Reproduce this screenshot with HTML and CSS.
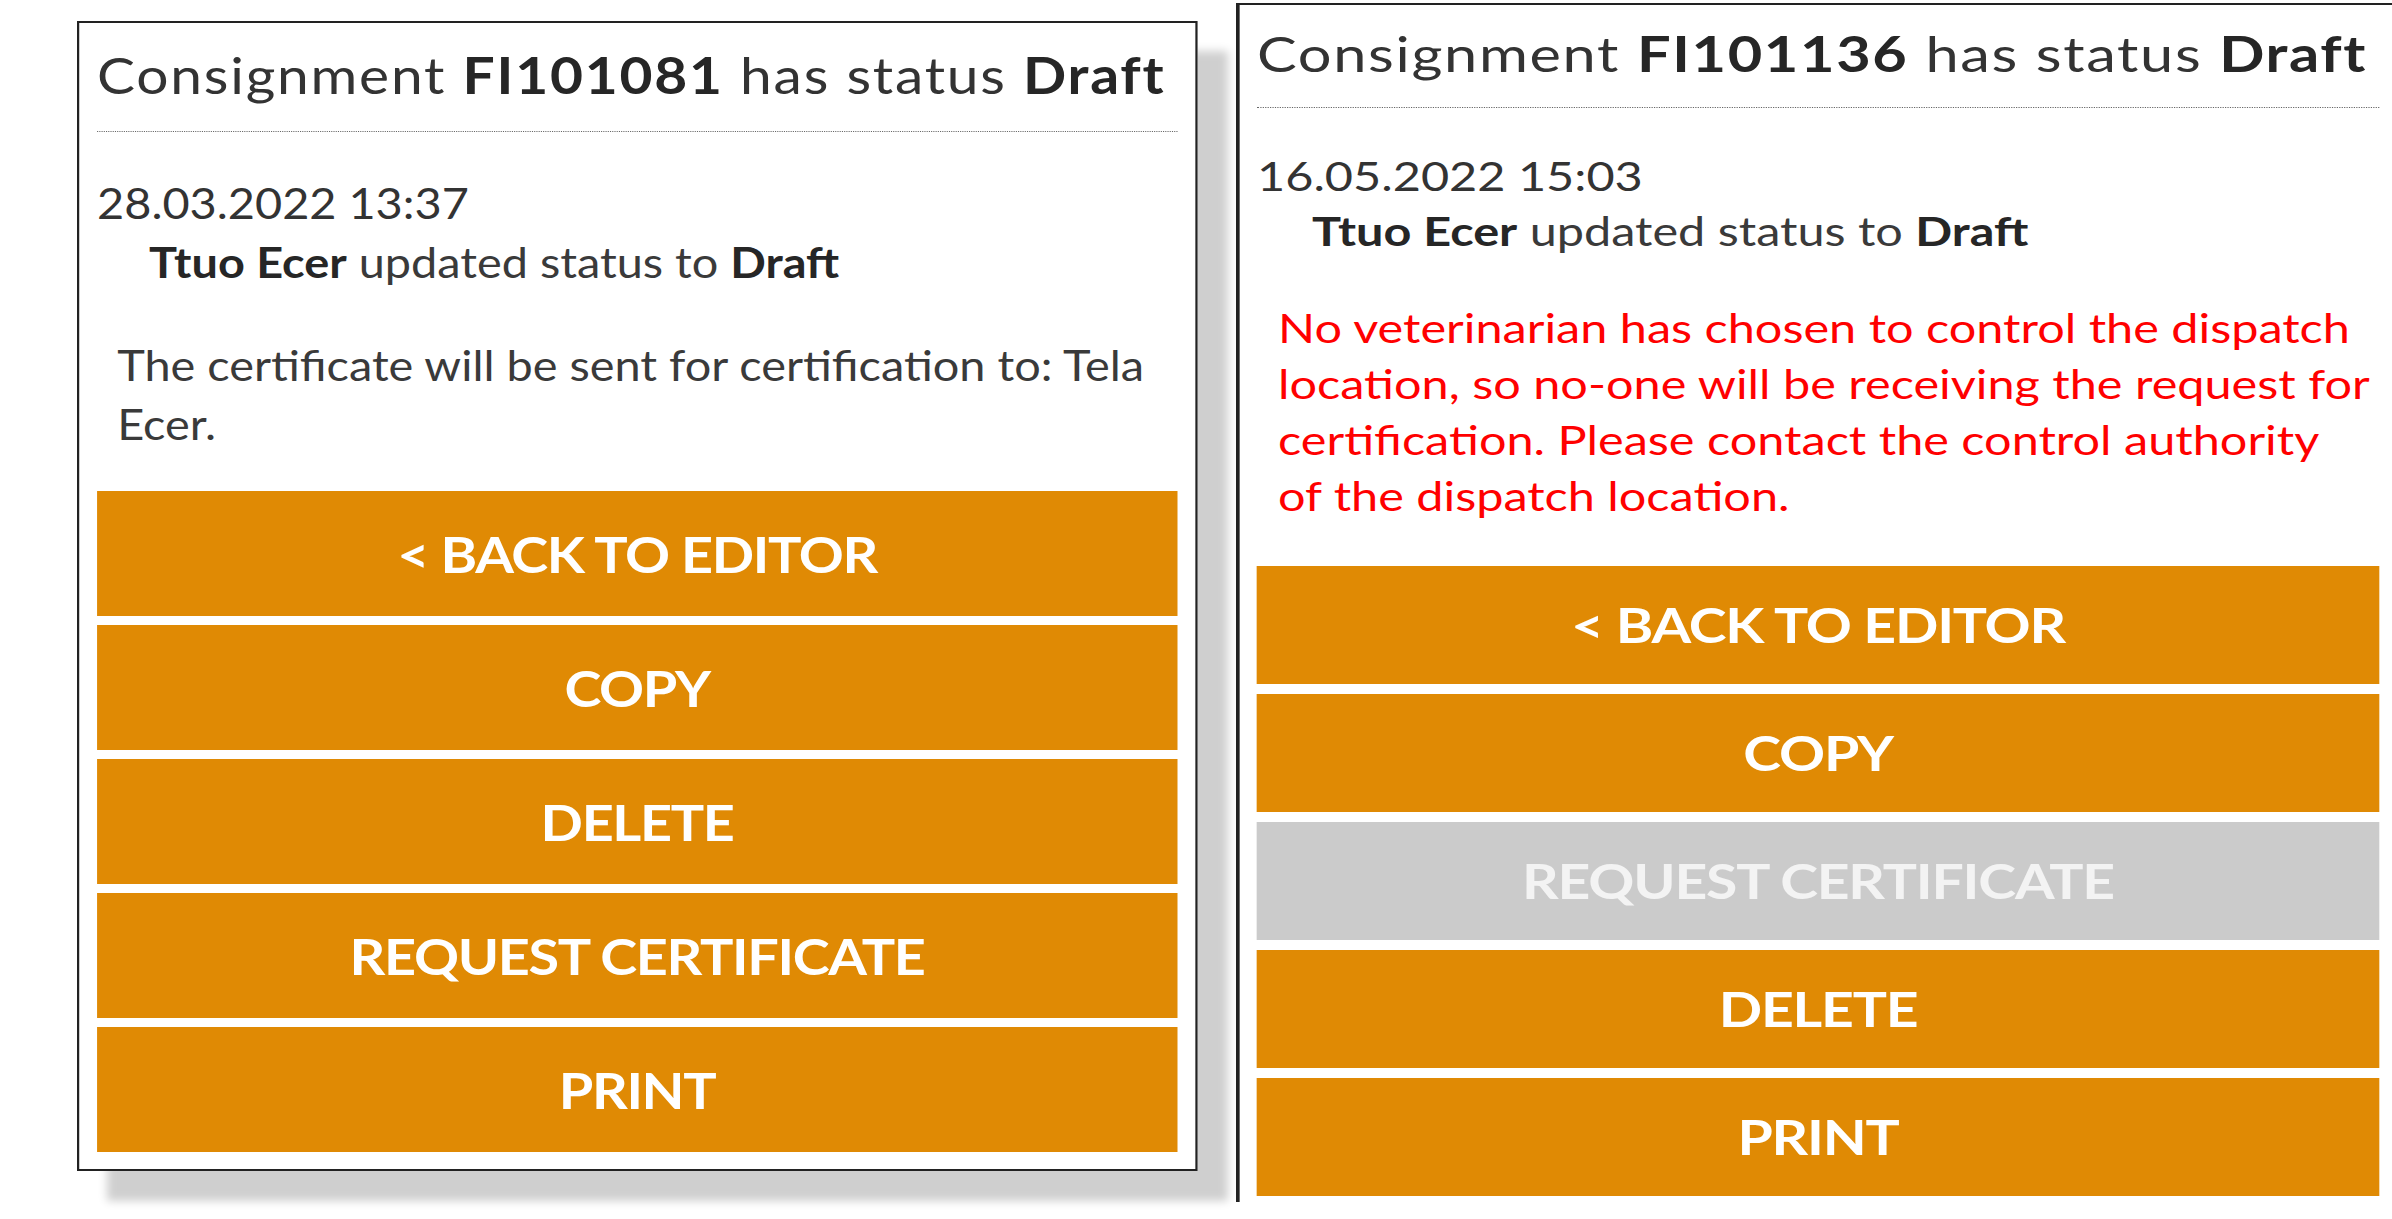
FILE: index.html
```html
<!DOCTYPE html>
<html>
<head>
    <title>Consignment status</title>
    <link rel="stylesheet" href="styles.css">
</head>
<body>
    <div class="board">
        <!-- certificate can be requested: recipient is known -->
        <section class="card card-left">
            <h2 class="card-title">Consignment <b>FI101081</b> has status <b>Draft</b></h2>
            <div class="history">
                <div class="history-date">28.03.2022 13:37</div>
                <div class="history-entry"><b>Ttuo Ecer</b> updated status to <b>Draft</b></div>
            </div>
            <p class="card-note">The certificate will be sent for certification to: Tela Ecer.</p>
            <div class="actions">
                <button class="action">&lt; BACK TO EDITOR</button>
                <button class="action">COPY</button>
                <button class="action">DELETE</button>
                <button class="action">REQUEST CERTIFICATE</button>
                <button class="action">PRINT</button>
            </div>
        </section>

        <!-- no veterinarian for the dispatch location, request is disabled -->
        <section class="card card-right">
            <h2 class="card-title">Consignment <b>FI101136</b> has status <b>Draft</b></h2>
            <div class="history">
                <div class="history-date">16.05.2022 15:03</div>
                <div class="history-entry"><b>Ttuo Ecer</b> updated status to <b>Draft</b></div>
            </div>
            <p class="card-warning">No veterinarian has chosen to control the dispatch location, so no-one will be receiving the request for certification. Please contact the control authority of the dispatch location.</p>
            <div class="actions">
                <button class="action">&lt; BACK TO EDITOR</button>
                <button class="action">COPY</button>
                <button class="action" disabled>REQUEST CERTIFICATE</button>
                <button class="action">DELETE</button>
                <button class="action">PRINT</button>
            </div>
        </section>
    </div>
</body>
</html>
```

FILE: styles.css
```css
html, body {
    margin: 0;
    height: 100%;
    background: white;
    overflow: hidden;
}

body {
    font-family: Lato, "Liberation Sans", sans-serif;
    color: #333;
}

.board {
    display: flex;
    align-items: flex-start;
}

/* the screenshots are stretched sideways, so each card is widened */
.card {
    flex: none;
    background: white;
    transform-origin: 0 0;
}

.card b {
    font-weight: 700;
    color: #262626;
}

.card-title {
    margin: 0;
    font-weight: 400;
    line-height: 1.2;
    white-space: nowrap;
    border-bottom: 1px dotted #666;
}

.history-entry {
    color: #3a3a3a;
}

.card-note,
.card-warning {
    margin: 0;
}

.actions {
    display: flex;
    flex-direction: column;
}

.action {
    display: block;
    width: 100%;
    border: none;
    margin: 0;
    padding: 0;
    background: #e08a04;
    color: white;
    font-family: Lato, "Liberation Sans", sans-serif;
    font-weight: 700;
    text-align: center;
    cursor: pointer;
}

.action:disabled {
    background: #cbcbcb;
    color: #f3f3f3;
    cursor: default;
}

/* left card */
.card-left {
    margin: 21px 0 0 77px;
    width: 968.6px;
    padding: 0 16.8px 17px 16px;
    border: 2px solid #222;
    box-shadow: 27px 30px 8px rgba(0, 0, 0, 0.19);
    transform: scaleX(1.115);
}

.card-left .card-title {
    font-size: 51px;
    letter-spacing: 1.6px;
    padding: 21px 0 26px;
}

.card-left .history {
    margin-top: 42px;
    font-size: 42px;
    line-height: 58.8px;
}

.card-left .history-entry {
    padding-left: 46.6px;
}

.card-left .card-note {
    margin-top: 44px;
    padding: 0 4px 0 18px;
    font-size: 42px;
    line-height: 58.8px;
    color: #3a3a3a;
}

.card-left .actions {
    margin-top: 38px;
    gap: 9px;
}

.card-left .action {
    height: 125px;
    font-size: 50px;
    letter-spacing: -1.2px;
}

/* right card, cut off by the window edge */
.card-right {
    margin: 3px 0 0 153.6px;
    width: 923.5px;
    padding: 0 20px 6px 14.3px;
    border-top: 2px solid #222;
    border-left: 3px solid #222;
    transform: scaleX(1.215);
}

.card-right .card-title {
    font-size: 49px;
    letter-spacing: 1.35px;
    padding: 19px 0 24px;
}

.card-right .history {
    margin-top: 41px;
    font-size: 40px;
    line-height: 55.5px;
}

.card-right .history-entry {
    padding-left: 45.3px;
}

.card-right .card-warning {
    margin-top: 40px;
    padding: 0 6px 0 17.3px;
    font-size: 40px;
    line-height: 56px;
    color: #ff0000;
}

.card-right .actions {
    margin-top: 42px;
    gap: 10px;
}

.card-right .action {
    height: 118px;
    font-size: 47px;
    letter-spacing: -1px;
}
```
